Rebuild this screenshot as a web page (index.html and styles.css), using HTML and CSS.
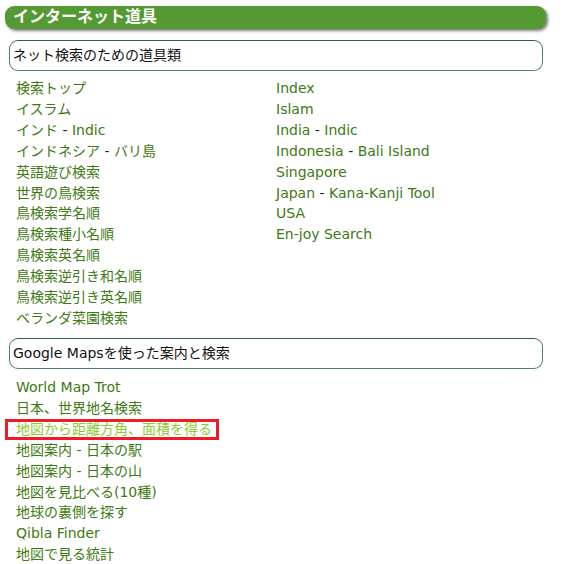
FILE: index.html
```html
<!DOCTYPE html>
<html lang="ja">
<head>
<meta charset="utf-8">
<link rel="stylesheet" href="styles.css">
</head>
<body>
<div class="page">
  <h1 class="title">インターネット道具</h1>

  <div class="section">ネット検索のための道具類</div>
  <div class="cols">
    <ul class="list">
      <li><a href="#">検索トップ</a></li>
      <li><a href="#">イスラム</a></li>
      <li><a href="#">インド</a> - <a href="#">Indic</a></li>
      <li><a href="#">インドネシア</a> - <a href="#">バリ島</a></li>
      <li><a href="#">英語遊び検索</a></li>
      <li><a href="#">世界の鳥検索</a></li>
      <li><a href="#">鳥検索学名順</a></li>
      <li><a href="#">鳥検索種小名順</a></li>
      <li><a href="#">鳥検索英名順</a></li>
      <li><a href="#">鳥検索逆引き和名順</a></li>
      <li><a href="#">鳥検索逆引き英名順</a></li>
      <li><a href="#">ベランダ菜園検索</a></li>
    </ul>
    <ul class="list">
      <li><a href="#">Index</a></li>
      <li><a href="#">Islam</a></li>
      <li><a href="#">India</a> - <a href="#">Indic</a></li>
      <li><a href="#">Indonesia</a> - <a href="#">Bali Island</a></li>
      <li><a href="#">Singapore</a></li>
      <li><a href="#">Japan</a> - <a href="#">Kana-Kanji Tool</a></li>
      <li><a href="#">USA</a></li>
      <li><a href="#">En-joy Search</a></li>
    </ul>
  </div>

  <div class="section section-next">Google Mapsを使った案内と検索</div>
  <ul class="list single">
    <li><a href="#">World Map Trot</a></li>
    <li><a href="#">日本、世界地名検索</a></li>
    <li><span class="focus"><a class="hover" href="#">地図から距離方角、面積を得る</a></span></li>
    <li><a href="#">地図案内 - 日本の駅</a></li>
    <li><a href="#">地図案内 - 日本の山</a></li>
    <li><a href="#">地図を見比べる(10種)</a></li>
    <li><a href="#">地球の裏側を探す</a></li>
    <li><a href="#">Qibla Finder</a></li>
    <li><a href="#">地図で見る統計</a></li>
  </ul>
</div>
</body>
</html>
```

FILE: styles.css
```css
html, body {
  margin: 0;
  padding: 0;
  background: #ffffff;
}

body {
  font-family: "DejaVu Sans", "Noto Sans CJK JP", sans-serif;
  font-size: 14px;
  color: #222222;
}

.page {
  padding: 6px 0 0 0;
  width: 548px;
}

.title {
  margin: 0 0 0 5px;
  height: 23px;
  width: 541px;
  background: #559933;
  border-radius: 9px;
  box-shadow: 2px 2px 3px #7f7f7f;
  color: #ffffff;
  font-size: 16px;
  font-weight: bold;
  line-height: 22px;
  padding-left: 8px;
  box-sizing: border-box;
}

.section {
  margin: 11px 0 0 9px;
  width: 534px;
  height: 31px;
  box-sizing: border-box;
  border: 1px solid #4f7f7a;
  border-top-color: #2f5f5a;
  border-radius: 9px;
  padding: 0 3px;
  line-height: 29px;
  color: #111111;
  font-size: 14px;
}

.section-next {
  margin-top: 9px;
}

.cols {
  display: grid;
  grid-template-columns: 260px 260px;
  margin: 7px 0 0 16px;
}

.list {
  list-style: none;
  margin: 0;
  padding: 0;
  line-height: 20.9px;
}

.list.single {
  margin: 8px 0 0 16px;
}

.list a {
  color: #3d7a12;
  text-decoration: none;
}

.focus {
  display: inline-block;
  border: 3px solid #ee1c25;
  margin-left: -11px;
  padding: 0 4px 0 8px;
  line-height: 15px;
}

.list a.hover {
  color: #8ccc33;
}
```
